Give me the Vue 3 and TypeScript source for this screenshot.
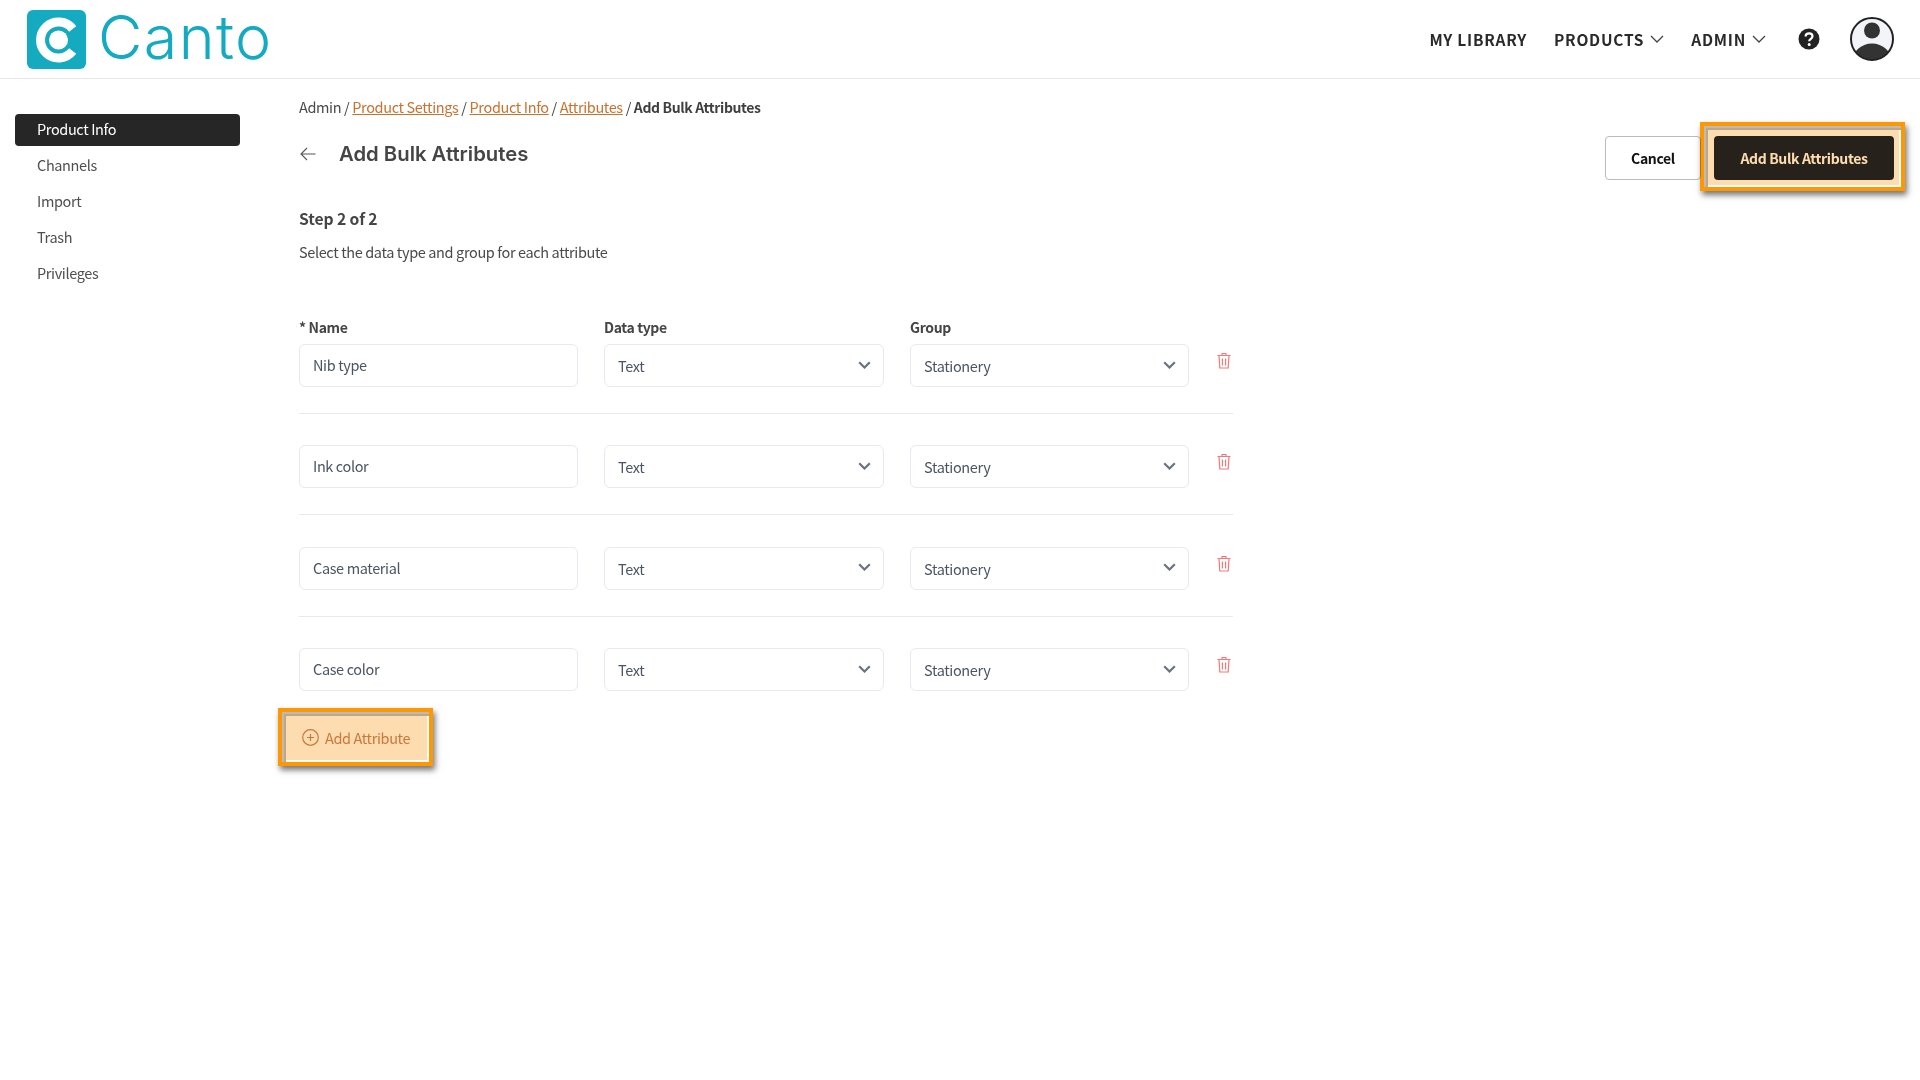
<script setup lang="ts">
// 侧边导航和属性行
const sideItems = ['Product Info', 'Channels', 'Import', 'Trash', 'Privileges']
const attributes = ['Nib type', 'Ink color', 'Case material', 'Case color']
</script>

<template>
  <div class="page">
    <header class="topbar">
      <div class="logo">
        <svg class="logo-mark" width="60" height="60" viewBox="0 0 60 60">
          <rect y="1" width="59" height="59" rx="6" fill="#14abc0" />
          <path d="M45.7 19.9A18 18 0 1 0 45.7 42.1" fill="none" stroke="#fff" stroke-width="9" />
          <circle cx="31.5" cy="31" r="9.500" fill="#fff" />
        </svg>
        <span class="logo-text">Canto</span>
      </div>
      <nav class="topnav">
        <a class="nav-link">MY LIBRARY</a>
        <a class="nav-link">PRODUCTS
          <svg width="14" height="8" viewBox="0 0 14 8"><path d="M1 1l6 6 6-6" fill="none" stroke="#444" stroke-width="1.3" /></svg>
        </a>
        <a class="nav-link">ADMIN
          <svg width="14" height="8" viewBox="0 0 14 8"><path d="M1 1l6 6 6-6" fill="none" stroke="#444" stroke-width="1.3" /></svg>
        </a>
        <svg class="help" width="22" height="22" viewBox="0 0 22 22">
          <circle cx="11" cy="11" r="10.5" fill="#222" />
          <path d="M7.6 8.6c0-2 1.5-3.3 3.5-3.3s3.4 1.2 3.4 3c0 2.600-3.300 2.500-3.300 5" fill="none" stroke="#fff" stroke-width="2.200" />
          <circle cx="11.200" cy="16.600" r="1.500" fill="#fff" />
        </svg>
        <svg class="avatar" width="44" height="44" viewBox="0 0 44 44">
          <defs>
            <clipPath id="avatar-clip"><circle cx="22" cy="22" r="21" /></clipPath>
          </defs>
          <circle cx="22" cy="22" r="21" fill="#f3f4f9" />
          <circle cx="22" cy="13.500" r="8" fill="#333" />
          <ellipse cx="22" cy="45" rx="20" ry="18.500" fill="#333" clip-path="url(#avatar-clip)" />
          <circle cx="22" cy="22" r="21" fill="none" stroke="#222" stroke-width="2" />
        </svg>
      </nav>
    </header>

    <div class="layout">
      <aside class="sidebar">
        <a v-for="(item, i) in sideItems" :key="item" class="side-item" :class="{ active: i === 0 }">{{ item }}</a>
      </aside>

      <main class="content">
        <div class="crumbs">
          Admin / <a>Product Settings</a> / <a>Product Info</a> / <a>Attributes</a> / <b>Add Bulk Attributes</b>
        </div>

        <div class="title-row">
          <svg class="back" width="16" height="14" viewBox="0 0 16 14"><path d="M15.500 7H1M7 1L1 7l6 6" fill="none" stroke="#555" stroke-width="1.100" /></svg>
          <h1>Add Bulk Attributes</h1>
          <div class="actions">
            <button class="btn-cancel">Cancel</button>
            <button class="btn-primary">
              Add Bulk Attributes
              <span class="mark mark-save"></span>
            </button>
          </div>
        </div>

        <div class="step">Step 2 of 2</div>
        <p class="hint">Select the data type and group for each attribute</p>

        <div class="labels">
          <label>* Name</label>
          <label>Data type</label>
          <label>Group</label>
        </div>

        <div v-for="(name, i) in attributes" :key="name" class="row" :class="{ last: i === attributes.length - 1 }">
          <div class="field">{{ name }}</div>
          <div class="field select">
            <span>Text</span>
            <svg width="13" height="8" viewBox="0 0 13 8"><path d="M1.200 1.200l5.300 5.300 5.300-5.300" fill="none" stroke="#6b7280" stroke-width="2.200" /></svg>
          </div>
          <div class="field select">
            <span>Stationery</span>
            <svg width="13" height="8" viewBox="0 0 13 8"><path d="M1.200 1.200l5.300 5.300 5.300-5.300" fill="none" stroke="#6b7280" stroke-width="2.200" /></svg>
          </div>
          <svg class="trash" width="14" height="17" viewBox="0 0 14 17">
            <path d="M.5 3.500h13M5 3.500V1.500h4v2M2 3.500l.8 12.500h8.400l.8-12.500M5.400 6.500v7M8.600 6.500v7" fill="none" stroke="#f47a7a" stroke-width="1.200" />
          </svg>
        </div>

        <button class="btn-add">
          <svg width="17" height="17" viewBox="0 0 17 17">
            <circle cx="8.500" cy="8.500" r="7.800" fill="none" stroke="#cf8a55" stroke-width="1.200" />
            <path d="M8.500 5v7M5 8.500h7" fill="none" stroke="#cf8a55" stroke-width="1.200" />
          </svg>
          Add Attribute
          <span class="mark mark-add"></span>
        </button>
      </main>
    </div>
  </div>
</template>

<style scoped>
.page {
  min-height: 1080px;
  background: #fff;
  font-family: "Noto Sans CJK SC", "Noto Sans", sans-serif;
  font-size: 14.5px;
  letter-spacing: -0.37px;
  color: #4a4a4a;
}

.topbar {
  display: flex;
  align-items: center;
  justify-content: space-between;
  height: 78px;
  padding: 0 26px 0 27px;
  border-bottom: 1px solid #e8e8e8;
}

.logo {
  display: flex;
  align-items: center;
  gap: 11px;
}

.logo-text {
  font-family: Inter, sans-serif;
  font-weight: 350;
  font-size: 61px;
  line-height: 74px;
  margin-bottom: 4px;
  letter-spacing: 1.4px;
  color: #14abc0;
}

.topnav {
  display: flex;
  align-items: center;
}

.nav-link {
  display: flex;
  align-items: center;
  gap: 6px;
  margin-right: 27px;
  font-size: 15.5px;
  font-weight: 600;
  letter-spacing: 0.75px;
  color: #2a2a2a;
}

.help {
  margin-left: 5px;
  margin-right: 30px;
}

.layout {
  display: flex;
}

.sidebar {
  flex: 0 0 299px;
  box-sizing: border-box;
  display: flex;
  flex-direction: column;
  gap: 4px;
  padding: 35px 59px 0 15px;
}

.side-item {
  height: 32px;
  padding-left: 22px;
  line-height: 30px;
  border-radius: 4px;
  color: #4f4f4f;
}

.side-item.active {
  background: #262626;
  color: #fff;
}

.content {
  flex: 1;
  padding: 19px 26px 0 0;
}

.crumbs {
  height: 20px;
  line-height: 18px;
}

.crumbs a {
  color: #c9722f;
  text-decoration: underline;
}

.crumbs b {
  font-size: 14px;
  font-weight: 600;
  color: #3f3f3f;
}

.title-row {
  display: flex;
  align-items: flex-start;
  margin-top: 18px;
}

.back {
  margin-top: 11px;
  margin-left: 1px;
  margin-right: 23px;
}

h1 {
  margin: 0;
  font-family: Inter, sans-serif;
  font-size: 20.3px;
  font-weight: 600;
  line-height: 36px;
  letter-spacing: 0;
  color: #454545;
}

.actions {
  display: flex;
  gap: 13px;
  margin-left: auto;
}

button {
  height: 44px;
  padding-bottom: 2px;
  font-family: inherit;
  font-size: 14px;
  font-weight: 600;
  letter-spacing: -0.35px;
  border-radius: 4px;
}

.btn-cancel {
  width: 96px;
  background: #fff;
  border: 1px solid #bbb;
  color: #111;
}

.btn-primary {
  position: relative;
  width: 180px;
  background: #262626;
  border: none;
  color: #fff;
}

.mark {
  position: absolute;
  box-sizing: border-box;
  border: 4px solid #ff9800;
  background: #fddcb0;
  mix-blend-mode: multiply;
  box-shadow:
    2px 4px 6px rgba(0, 0, 0, 0.55),
    inset 2px 2px 0 #bbb,
    inset 4px 4px 0 #bda787,
    inset -2px -2px 0 #fff;
}

.mark-save {
  inset: -14px -11px -11px -14px;
}

.mark-add {
  inset: -11px -13px -11px -21px;
}

.step {
  margin-top: 27px;
  height: 24px;
  line-height: 23px;
  font-size: 15.7px;
  font-weight: 600;
  letter-spacing: -0.1px;
  color: #454545;
}

.hint {
  margin: 12px 0 0;
  height: 20px;
  line-height: 18px;
}

.labels {
  display: grid;
  grid-template-columns: 279px 280px 279px;
  column-gap: 26px;
  margin-top: 55px;
  height: 20px;
  line-height: 18px;
}

.labels label {
  font-size: 14px;
  font-weight: 600;
  color: #454545;
}

.row {
  display: grid;
  grid-template-columns: 279px 280px 279px 44px;
  column-gap: 26px;
  width: 934px;
  padding-top: 6px;
  padding-bottom: 26px;
  border-bottom: 1px solid #e8e8ef;
  margin-bottom: 25.4px;
}

.row.last {
  border-bottom: none;
  padding-bottom: 0;
  margin-bottom: 0;
}

.field {
  box-sizing: border-box;
  display: flex;
  align-items: center;
  height: 43px;
  padding: 0 13px 2px;
  border: 1px solid #e8e8f0;
  border-radius: 6px;
  color: #4b5563;
}

.select {
  justify-content: space-between;
  padding-right: 12px;
}

.select span {
  padding-top: 2px;
}

.trash {
  margin-left: 2px;
  margin-top: 8px;
}

.btn-add {
  position: relative;
  display: flex;
  align-items: center;
  gap: 6px;
  width: 121px;
  height: 36px;
  margin-top: 28px;
  padding: 0 0 0 3px;
  background: transparent;
  border: none;
  font-size: 14.5px;
  font-weight: 400;
  letter-spacing: -0.37px;
  color: #cf8a55;
}
</style>

<style>
html,
body {
  margin: 0;
  background: #fff;
}
</style>
